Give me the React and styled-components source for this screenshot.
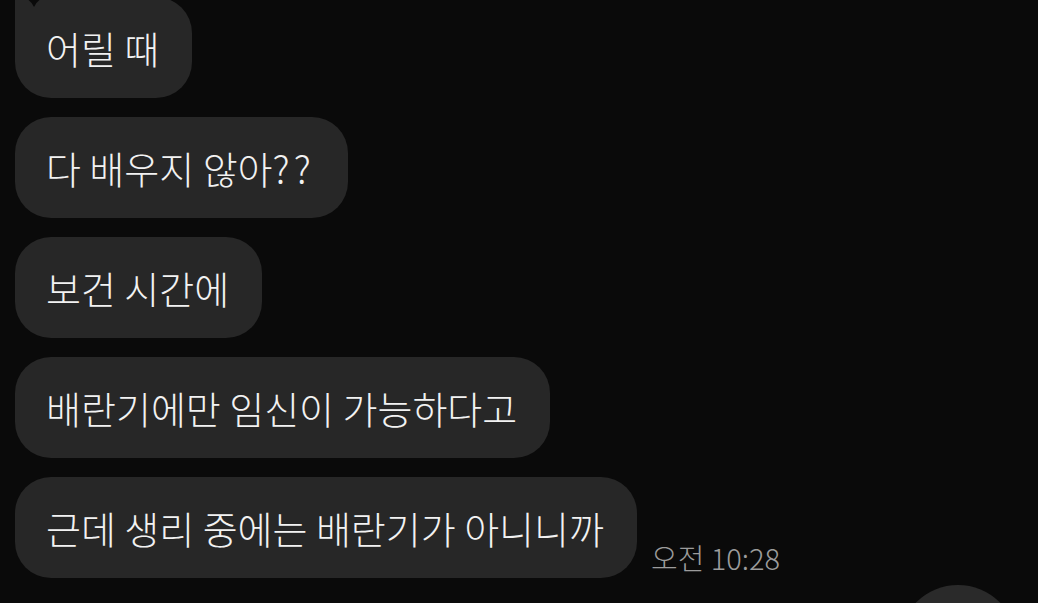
import React from "react";
import styled, { createGlobalStyle } from "styled-components";

const Global = createGlobalStyle`
  html, body { margin: 0; padding: 0; background: #0a0a0a; }
  #root { height: 603px; overflow: hidden; }
`;

const Screen = styled.div`
  height: 603px;
  overflow: hidden;
  background: #0a0a0a;
  display: flex;
  flex-direction: column;
  gap: 19px;
  padding-left: 15px;
  box-sizing: border-box;
  font-family: "Noto Sans CJK KR", "Noto Sans", sans-serif;
`;

const Row = styled.div`
  display: flex;
  align-items: flex-end;
  gap: 14px;
  margin-top: ${(p) => p.$offset || 0}px;
  justify-content: ${(p) => (p.$right ? "flex-end" : "flex-start")};
  padding-right: ${(p) => (p.$right ? 21 : 0)}px;
`;

const Bubble = styled.div`
  position: relative;
  flex: none;
  height: 101px;
  box-sizing: border-box;
  display: flex;
  align-items: center;
  padding: 0 33px 0 31px;
  background: #272727;
  color: #f2f2f2;
  border-radius: 36px;
  border-top-left-radius: ${(p) => (p.$tail ? "0" : "36px")};
  font-size: 38px;
  font-weight: 300;
  letter-spacing: 0;
  white-space: nowrap;
`;

const Punct = styled.span`
  letter-spacing: 4px;
`;

const TailNotch = styled.svg`
  position: absolute;
  left: 6px;
  top: 0;
  width: 24px;
  height: 12px;
`;

const Time = styled.div`
  color: #9c9c9c;
  font-size: 29px;
  font-weight: 300;
  padding-bottom: 0;
  white-space: nowrap;
`;

const Circle = styled.div`
  width: 118px;
  height: 118px;
  border-radius: 50%;
  background: #2a2a2a;
  flex: none;
`;

export default function App() {
  return (
    <>
      <Global />
      <Screen>
        <Row $offset={-3}>
          <Bubble $tail>
            <TailNotch viewBox="0 0 24 12">
              <path d="M2 0 Q10 3 13 10 Q16 3 24 0 Z" fill="#0a0a0a" />
            </TailNotch>
            어릴 때
          </Bubble>
        </Row>
        <Row>
          <Bubble>
            다 배우지 않아<Punct>??</Punct>
          </Bubble>
        </Row>
        <Row>
          <Bubble>보건 시간에</Bubble>
        </Row>
        <Row>
          <Bubble>배란기에만 임신이 가능하다고</Bubble>
        </Row>
        <Row>
          <Bubble>근데 생리 중에는 배란기가 아니니까</Bubble>
          <Time>오전 10:28</Time>
        </Row>
        <Row $right $offset={-12}>
          <Circle />
        </Row>
      </Screen>
    </>
  );
}
